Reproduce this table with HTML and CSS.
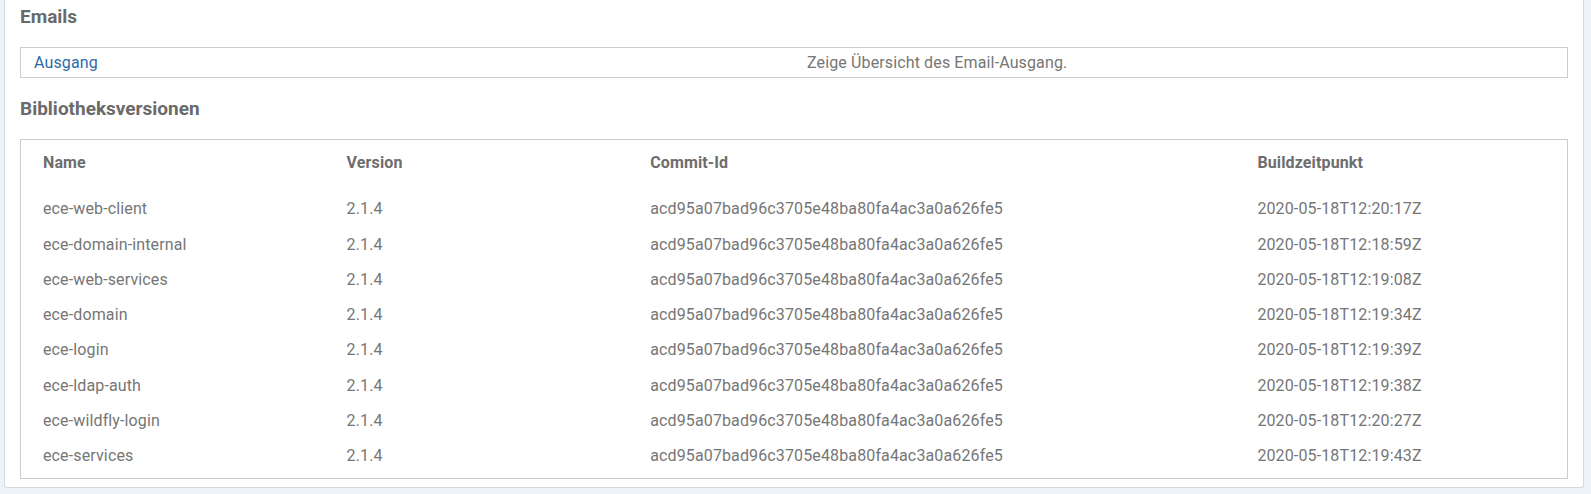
FILE: index.html
```html
<!DOCTYPE html>
<html lang="de">
<head>
<meta charset="utf-8">
<title>Info</title>
<link rel="stylesheet" href="styles.css">
</head>
<body>
<div class="panel">
  <h3 class="section-title first">Emails</h3>
  <div class="box">
    <table class="links">
      <tr>
        <td><a class="link" href="#">Ausgang</a></td>
        <td>Zeige Übersicht des Email-Ausgang.</td>
      </tr>
    </table>
  </div>
  <h3 class="section-title">Bibliotheksversionen</h3>
  <div class="box box-padded">
    <table class="versions">
      <colgroup>
        <col class="c20"><col class="c20"><col class="c40"><col class="c20">
      </colgroup>
      <thead>
        <tr><th>Name</th><th>Version</th><th>Commit-Id</th><th>Buildzeitpunkt</th></tr>
      </thead>
      <tbody>
        <tr><td>ece-web-client</td><td>2.1.4</td><td>acd95a07bad96c3705e48ba80fa4ac3a0a626fe5</td><td>2020-05-18T12:20:17Z</td></tr>
        <tr><td>ece-domain-internal</td><td>2.1.4</td><td>acd95a07bad96c3705e48ba80fa4ac3a0a626fe5</td><td>2020-05-18T12:18:59Z</td></tr>
        <tr><td>ece-web-services</td><td>2.1.4</td><td>acd95a07bad96c3705e48ba80fa4ac3a0a626fe5</td><td>2020-05-18T12:19:08Z</td></tr>
        <tr><td>ece-domain</td><td>2.1.4</td><td>acd95a07bad96c3705e48ba80fa4ac3a0a626fe5</td><td>2020-05-18T12:19:34Z</td></tr>
        <tr><td>ece-login</td><td>2.1.4</td><td>acd95a07bad96c3705e48ba80fa4ac3a0a626fe5</td><td>2020-05-18T12:19:39Z</td></tr>
        <tr><td>ece-ldap-auth</td><td>2.1.4</td><td>acd95a07bad96c3705e48ba80fa4ac3a0a626fe5</td><td>2020-05-18T12:19:38Z</td></tr>
        <tr><td>ece-wildfly-login</td><td>2.1.4</td><td>acd95a07bad96c3705e48ba80fa4ac3a0a626fe5</td><td>2020-05-18T12:20:27Z</td></tr>
        <tr><td>ece-services</td><td>2.1.4</td><td>acd95a07bad96c3705e48ba80fa4ac3a0a626fe5</td><td>2020-05-18T12:19:43Z</td></tr>
      </tbody>
    </table>
  </div>
</div>
</body>
</html>
```
FILE: styles.css
```css
html, body {
  margin: 0;
  padding: 0;
  background: #eef3f7;
}
body {
  font-family: Roboto, "Liberation Sans", sans-serif;
  font-size: 16px;
  letter-spacing: 0.13px;
  color: #767676;
}
.panel {
  margin-left: 4px;
  width: 1548px;
  background: #ffffff;
  border: 1px solid #d3dae0;
  border-top: none;
  border-radius: 0 0 3px 3px;
  padding: 4px 15px 8px 15px;
}
.section-title {
  margin: 18px 0 17px 0;
  font-size: 19px;
  line-height: 26px;
  font-weight: 700;
  letter-spacing: 0;
  color: #6a6a6a;
}
.section-title.first {
  margin-top: 0;
}
.box {
  border: 1px solid #c9ced3;
  background: #fff;
}
.box-padded {
  padding: 0 14px 4px 14px;
}
table {
  border-collapse: collapse;
  width: 100%;
  table-layout: fixed;
}
.links td {
  width: 50%;
  padding: 1px 13px 1px 13px;
  line-height: 27px;
  text-align: left;
}
.link {
  color: #2e6aa6;
  text-decoration: none;
}
.c20 { width: 20%; }
.c40 { width: 40%; }
.versions th {
  text-align: left;
  font-weight: 700;
  color: #6d6d6d;
  padding: 13px 8px 19px 8px;
  line-height: 19.3px;
}
.versions td {
  padding: 8px;
  line-height: 19.3px;
  white-space: nowrap;
}
```
